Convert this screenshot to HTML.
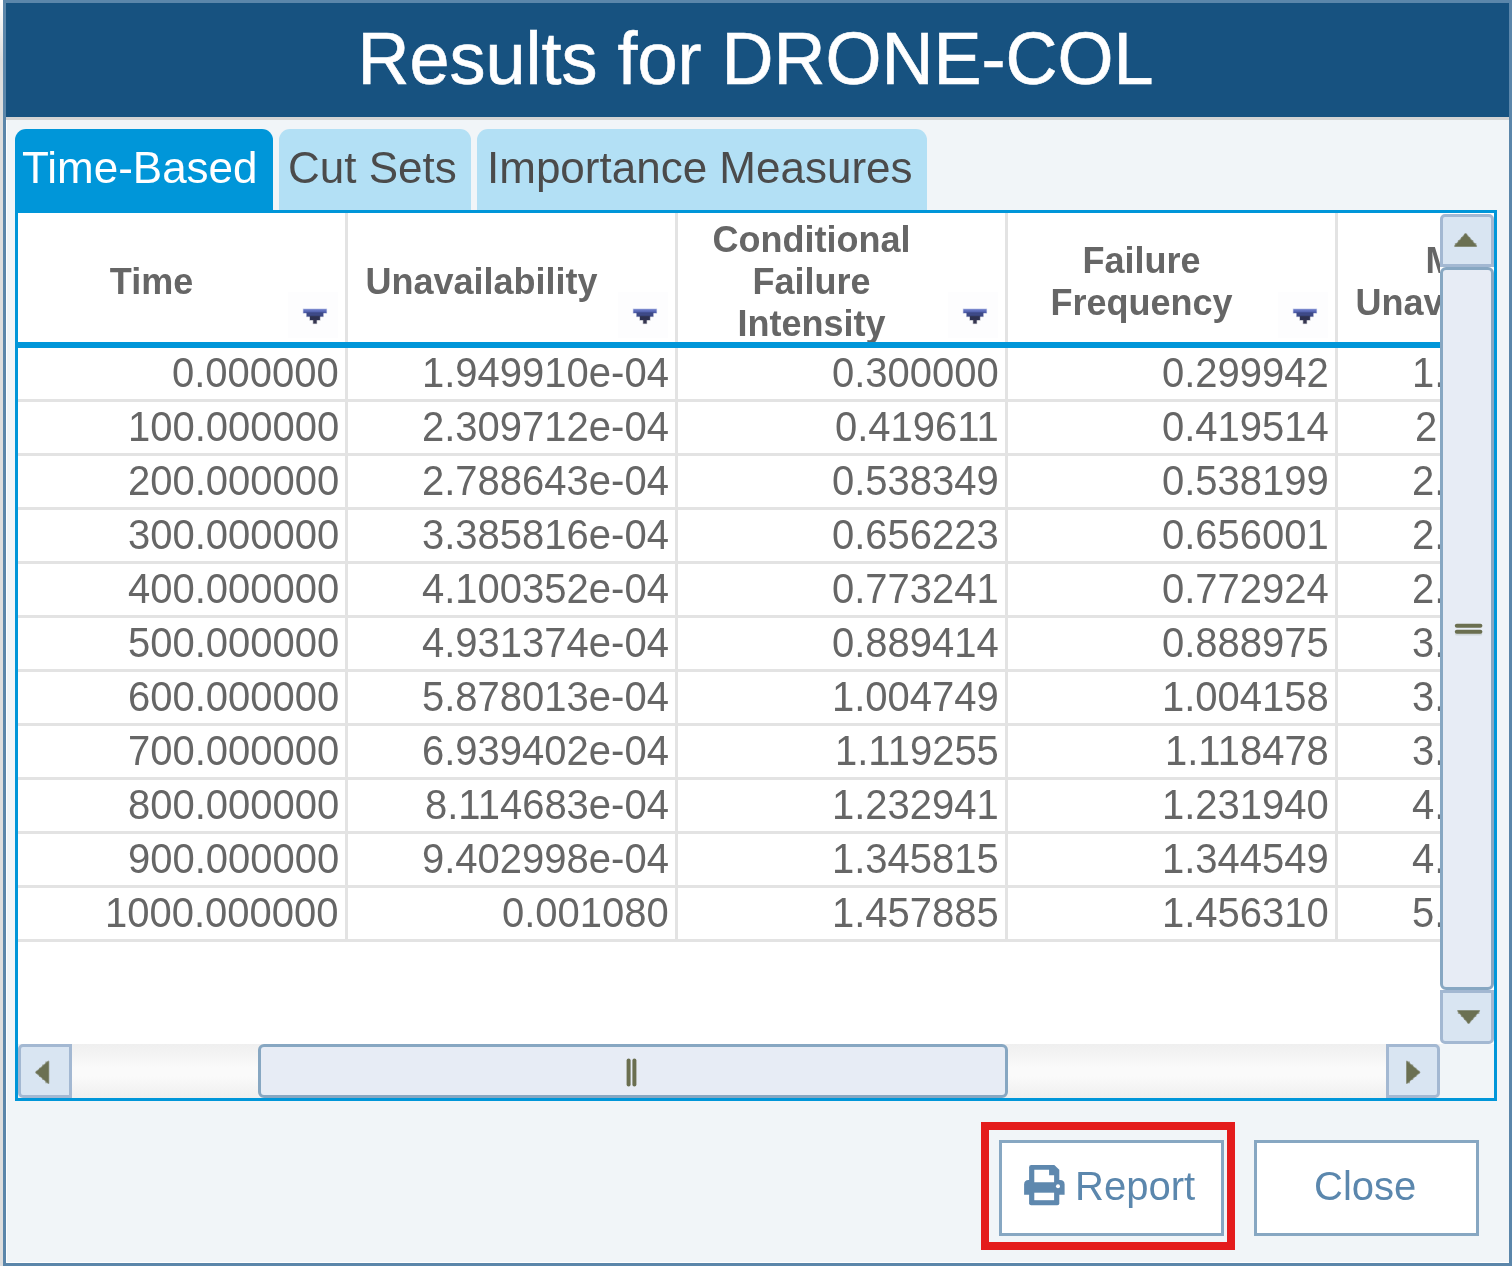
<!DOCTYPE html>
<html><head><meta charset="utf-8">
<style>
*{box-sizing:border-box}
html,body{margin:0;padding:0;width:1512px;height:1266px;overflow:hidden;background:#dedede;font-family:"Liberation Sans",sans-serif}
.a{position:absolute}
#strip{left:0;top:0;width:3px;height:1266px;background:linear-gradient(#ffffff 0px,#dedede 60px,#dedede)}
#dlg{left:3px;top:0;width:1509px;height:1266px;background:#5b86aa}
#inner{left:6px;top:3px;width:1503px;height:1260px;background:#f1f5f8;border-left:1px solid #fff;border-bottom:1px solid #fff}
#hdr{left:6px;top:3px;width:1503px;height:114px;background:#175280}
#hline{left:6px;top:117px;width:1503px;height:3px;background:#d4d4d4}
#title{left:0;top:23px;width:1511px;text-align:center;color:#fff;font-size:72px;line-height:72px;white-space:nowrap;transform:scaleY(1.025);transform-origin:0 61px;-webkit-text-stroke:0.6px #fff}
.tab{top:128.5px;height:81.5px;border-radius:11px 11px 0 0;background:#b3e0f5;color:#4b4b4b;font-size:44px;line-height:44px;white-space:nowrap}
.tab span{position:absolute;top:17px}
#tab1{left:14.5px;width:258.5px;background:#0096d9;color:#fff}
#tab2{left:279px;width:192px}
#tab3{left:477px;width:450px}
#tbl{left:15px;top:210px;width:1482px;height:891px;border:3px solid #0096d9;background:#fff}
.vl{top:213px;width:3px;height:729px;background:#e3e3e3}
.hl{left:18px;width:1422px;height:3px;background:#e3e3e3}
#hdrc{left:18px;top:213px;width:1422px;height:129px;overflow:hidden}
.hc{position:absolute;width:269px;text-align:center;font-weight:bold;font-size:36px;line-height:42px;color:#666;white-space:nowrap}
.sbg{position:absolute;top:79px;width:50px;height:46px;background:rgba(236,239,250,0.12)}
#ov{left:0;top:0;pointer-events:none}
#ov2{left:0;top:0;pointer-events:none}
#hbord{left:18px;top:342px;width:1422px;height:6px;background:#0096d9}
#body{left:18px;top:213px;width:1422px;height:729px;overflow:hidden}
.dc{position:absolute;font-size:40px;line-height:40px;color:#666;white-space:nowrap;transform:scaleY(1.04);transform-origin:0 33.87px}
#empty{left:18px;top:942px;width:1476px;height:102px;background:#fff}
/* scrollbars */
.sbtn{background:#d9e5f2;border:3px solid #a3b8d2}
#vup{left:1440px;top:214px;width:54px;height:53px;border-radius:5px 5px 0 0}
#vthumb{left:1440px;top:267px;width:54px;height:723px;background:#e7ecf5;border:3px solid #87a7c2;border-radius:6px}
#vdn{left:1440px;top:990px;width:54px;height:54px;border-radius:0 0 5px 5px}
#htrack{left:18px;top:1044px;width:1422px;height:54px;background:linear-gradient(#efefef,#fafafa 45%,#fafafa 60%,#efefef)}
#hleft{left:18px;top:1044px;width:54px;height:54px;border-radius:5px 0 0 5px}
#hthumb{left:258px;top:1044px;width:750px;height:54px;background:#e7ecf5;border:3px solid #87a7c2;border-radius:6px}
#hright{left:1386px;top:1044px;width:54px;height:54px;border-radius:0 5px 5px 0}
#corner{left:1440px;top:1044px;width:54px;height:54px;background:#f1f5f8}
/* buttons */
#red{left:981px;top:1122px;width:254px;height:128px;border:8px solid #e41c1c}
.btn{top:1140px;width:225px;height:96px;border:3px solid #87a7c2;background:#fff;color:#5b87ad;font-size:40px;line-height:40px;white-space:nowrap}
.btn span{position:absolute}
#rep{left:999px}
#cls{left:1254px}
.dc,.hc,.tab span,.btn span,#title{will-change:transform}
</style></head><body>
<div class="a" id="strip"></div>
<div class="a" id="dlg"></div>
<div class="a" id="inner"></div>
<div class="a" id="hdr"></div>
<div class="a" id="hline"></div>
<div class="a" id="title">Results for DRONE-COL</div>
<div class="a tab" id="tab1"><span style="left:7px">Time-Based</span></div>
<div class="a tab" id="tab2"><span style="left:8.5px">Cut Sets</span></div>
<div class="a tab" id="tab3"><span style="left:10px">Importance Measures</span></div>
<div class="a" id="tbl"></div>
<div class="a vl" style="left:345px"></div>
<div class="a vl" style="left:675px"></div>
<div class="a vl" style="left:1005px"></div>
<div class="a vl" style="left:1335px"></div>
<div class="a hl" style="top:399px"></div>
<div class="a hl" style="top:453px"></div>
<div class="a hl" style="top:507px"></div>
<div class="a hl" style="top:561px"></div>
<div class="a hl" style="top:615px"></div>
<div class="a hl" style="top:669px"></div>
<div class="a hl" style="top:723px"></div>
<div class="a hl" style="top:777px"></div>
<div class="a hl" style="top:831px"></div>
<div class="a hl" style="top:885px"></div>
<div class="a hl" style="top:939px"></div>
<div class="a" id="hdrc"><div class="sbg" style="left:270px"></div><div class="hc" style="left:-1.0px;top:48px">Time</div><div class="sbg" style="left:600px"></div><div class="hc" style="left:329.0px;top:48px">Unavailability</div><div class="sbg" style="left:930px"></div><div class="hc" style="left:659.0px;top:5.5px">Conditional<br>Failure<br>Intensity</div><div class="sbg" style="left:1260px"></div><div class="hc" style="left:989.0px;top:26.5px">Failure<br>Frequency</div><div class="hc" style="left:1318.8px;top:26.5px">Mean<br>Unavailability</div></div>
<div class="a" id="body"><div class="dc" style="top:139.6px;right:1101px">0.000000</div><div class="dc" style="top:139.6px;right:771px">1.949910e-04</div><div class="dc" style="top:139.6px;right:441px">0.300000</div><div class="dc" style="top:139.6px;right:111px">0.299942</div><div class="dc" style="top:139.6px;left:1393.6px">1.949910e-04</div><div class="dc" style="top:193.6px;right:1101px">100.000000</div><div class="dc" style="top:193.6px;right:771px">2.309712e-04</div><div class="dc" style="top:193.6px;right:441px">0.419611</div><div class="dc" style="top:193.6px;right:111px">0.419514</div><div class="dc" style="top:193.6px;left:1396.6px">2.129811e-04</div><div class="dc" style="top:247.6px;right:1101px">200.000000</div><div class="dc" style="top:247.6px;right:771px">2.788643e-04</div><div class="dc" style="top:247.6px;right:441px">0.538349</div><div class="dc" style="top:247.6px;right:111px">0.538199</div><div class="dc" style="top:247.6px;left:1393.6px">2.349422e-04</div><div class="dc" style="top:301.6px;right:1101px">300.000000</div><div class="dc" style="top:301.6px;right:771px">3.385816e-04</div><div class="dc" style="top:301.6px;right:441px">0.656223</div><div class="dc" style="top:301.6px;right:111px">0.656001</div><div class="dc" style="top:301.6px;left:1393.6px">2.608520e-04</div><div class="dc" style="top:355.6px;right:1101px">400.000000</div><div class="dc" style="top:355.6px;right:771px">4.100352e-04</div><div class="dc" style="top:355.6px;right:441px">0.773241</div><div class="dc" style="top:355.6px;right:111px">0.772924</div><div class="dc" style="top:355.6px;left:1393.6px">2.911350e-04</div><div class="dc" style="top:409.6px;right:1101px">500.000000</div><div class="dc" style="top:409.6px;right:771px">4.931374e-04</div><div class="dc" style="top:409.6px;right:441px">0.889414</div><div class="dc" style="top:409.6px;right:111px">0.888975</div><div class="dc" style="top:409.6px;left:1393.6px">3.262000e-04</div><div class="dc" style="top:463.6px;right:1101px">600.000000</div><div class="dc" style="top:463.6px;right:771px">5.878013e-04</div><div class="dc" style="top:463.6px;right:441px">1.004749</div><div class="dc" style="top:463.6px;right:111px">1.004158</div><div class="dc" style="top:463.6px;left:1393.6px">3.664000e-04</div><div class="dc" style="top:517.6px;right:1101px">700.000000</div><div class="dc" style="top:517.6px;right:771px">6.939402e-04</div><div class="dc" style="top:517.6px;right:441px">1.119255</div><div class="dc" style="top:517.6px;right:111px">1.118478</div><div class="dc" style="top:517.6px;left:1393.6px">3.929000e-04</div><div class="dc" style="top:571.6px;right:1101px">800.000000</div><div class="dc" style="top:571.6px;right:771px">8.114683e-04</div><div class="dc" style="top:571.6px;right:441px">1.232941</div><div class="dc" style="top:571.6px;right:111px">1.231940</div><div class="dc" style="top:571.6px;left:1393.6px">4.319000e-04</div><div class="dc" style="top:625.6px;right:1101px">900.000000</div><div class="dc" style="top:625.6px;right:771px">9.402998e-04</div><div class="dc" style="top:625.6px;right:441px">1.345815</div><div class="dc" style="top:625.6px;right:111px">1.344549</div><div class="dc" style="top:625.6px;left:1393.6px">4.753000e-04</div><div class="dc" style="top:679.6px;right:1101px">1000.000000</div><div class="dc" style="top:679.6px;right:771px">0.001080</div><div class="dc" style="top:679.6px;right:441px">1.457885</div><div class="dc" style="top:679.6px;right:111px">1.456310</div><div class="dc" style="top:679.6px;left:1393.6px">5.232000e-04</div></div>
<div class="a" id="hbord"></div>
<div class="a" id="empty"></div>
<div class="a" id="htrack"></div>
<div class="a sbtn" id="hleft"></div>
<div class="a" id="hthumb"></div>
<div class="a sbtn" id="hright"></div>
<div class="a" id="corner"></div>
<div class="a sbtn" id="vup"></div>
<div class="a" id="vthumb"></div>
<div class="a sbtn" id="vdn"></div>
<div class="a" id="red"></div>
<div class="a btn" id="rep"><span style="left:73px;top:23px">Report</span></div>
<div class="a btn" id="cls"><span style="left:56.5px;top:23px">Close</span></div>
<svg class="a" id="ov" width="1512" height="1266" viewBox="0 0 1512 1266"><defs><linearGradient id="sg" x1="0" y1="0" x2="0" y2="1"><stop offset="0" stop-color="#7282cc"/><stop offset="1" stop-color="#4756a3"/></linearGradient></defs><rect x="303.40" y="309.10" width="23.10" height="3.90" fill="url(#sg)" stroke="url(#sg)" stroke-opacity="0.35" stroke-width="1.2"/><rect x="306.70" y="312.60" width="16.50" height="3.90" fill="#3e4a86" stroke="#3e4a86" stroke-opacity="0.35" stroke-width="1.2"/><rect x="310.00" y="316.10" width="9.90" height="3.90" fill="#2c3050" stroke="#2c3050" stroke-opacity="0.35" stroke-width="1.2"/><rect x="313.30" y="319.60" width="3.30" height="3.90" fill="#363651" stroke="#363651" stroke-opacity="0.35" stroke-width="1.2"/><rect x="633.40" y="309.10" width="23.10" height="3.90" fill="url(#sg)" stroke="url(#sg)" stroke-opacity="0.35" stroke-width="1.2"/><rect x="636.70" y="312.60" width="16.50" height="3.90" fill="#3e4a86" stroke="#3e4a86" stroke-opacity="0.35" stroke-width="1.2"/><rect x="640.00" y="316.10" width="9.90" height="3.90" fill="#2c3050" stroke="#2c3050" stroke-opacity="0.35" stroke-width="1.2"/><rect x="643.30" y="319.60" width="3.30" height="3.90" fill="#363651" stroke="#363651" stroke-opacity="0.35" stroke-width="1.2"/><rect x="963.40" y="309.10" width="23.10" height="3.90" fill="url(#sg)" stroke="url(#sg)" stroke-opacity="0.35" stroke-width="1.2"/><rect x="966.70" y="312.60" width="16.50" height="3.90" fill="#3e4a86" stroke="#3e4a86" stroke-opacity="0.35" stroke-width="1.2"/><rect x="970.00" y="316.10" width="9.90" height="3.90" fill="#2c3050" stroke="#2c3050" stroke-opacity="0.35" stroke-width="1.2"/><rect x="973.30" y="319.60" width="3.30" height="3.90" fill="#363651" stroke="#363651" stroke-opacity="0.35" stroke-width="1.2"/><rect x="1293.40" y="309.10" width="23.10" height="3.90" fill="url(#sg)" stroke="url(#sg)" stroke-opacity="0.35" stroke-width="1.2"/><rect x="1296.70" y="312.60" width="16.50" height="3.90" fill="#3e4a86" stroke="#3e4a86" stroke-opacity="0.35" stroke-width="1.2"/><rect x="1300.00" y="316.10" width="9.90" height="3.90" fill="#2c3050" stroke="#2c3050" stroke-opacity="0.35" stroke-width="1.2"/><rect x="1303.30" y="319.60" width="3.30" height="3.90" fill="#363651" stroke="#363651" stroke-opacity="0.35" stroke-width="1.2"/><path d="M1454.86 243.07h21.49v3.07h-21.49ZM1457.92 240.00h15.35v3.07h-15.35ZM1460.99 236.93h9.21v3.07h-9.21ZM1464.06 233.86h3.07v3.07h-3.07Z" fill="#6b7052" fill-opacity="0.5"/><path d="M1454.86 246.14L1476.34 246.14L1465.60 233.86Z" fill="#6b7052" stroke="#6b7052" stroke-width="1.6" stroke-linejoin="round" stroke-opacity="0.6"/><path d="M1457.86 1010.80h21.49v3.10h-21.49ZM1460.92 1013.90h15.35v3.10h-15.35ZM1463.99 1017.00h9.21v3.10h-9.21ZM1467.06 1020.10h3.07v3.10h-3.07Z" fill="#6b7052" fill-opacity="0.5"/><path d="M1457.86 1010.80L1479.34 1010.80L1468.60 1023.20Z" fill="#6b7052" stroke="#6b7052" stroke-width="1.6" stroke-linejoin="round" stroke-opacity="0.6"/><path d="M45.35 1061.45h3.15v21.70h-3.15ZM42.20 1064.55h3.15v15.50h-3.15ZM39.05 1067.65h3.15v9.30h-3.15ZM35.90 1070.75h3.15v3.10h-3.15Z" fill="#6b7052" fill-opacity="0.5"/><path d="M48.50 1061.45L48.50 1083.15L35.90 1072.30Z" fill="#6b7052" stroke="#6b7052" stroke-width="1.6" stroke-linejoin="round" stroke-opacity="0.6"/><path d="M1406.80 1061.45h3.20v21.70h-3.20ZM1410.00 1064.55h3.20v15.50h-3.20ZM1413.20 1067.65h3.20v9.30h-3.20ZM1416.40 1070.75h3.20v3.10h-3.20Z" fill="#6b7052" fill-opacity="0.5"/><path d="M1406.80 1061.45L1406.80 1083.15L1419.60 1072.30Z" fill="#6b7052" stroke="#6b7052" stroke-width="1.6" stroke-linejoin="round" stroke-opacity="0.6"/><rect x="1455" y="632.5" width="27.2" height="3" rx="1.5" fill="#c2c9c9" fill-opacity="0.6"/><rect x="1454.8" y="623.8" width="27.6" height="4" rx="2" fill="#6b6f50"/><rect x="1454.8" y="629.8" width="27.6" height="4" rx="2" fill="#6b6f50"/><rect x="626.6" y="1058.6" width="4" height="28" rx="2" fill="#6b6f50"/><rect x="632.4" y="1058.6" width="4" height="28" rx="2" fill="#6b6f50"/></svg><svg class="a" id="ov2" width="1512" height="1266" viewBox="0 0 1512 1266"><g transform="translate(1024.1,1165)"><path d="M5 2.2 Q5 0 7.2 0 H30.2 L35.2 4.8 V16 H5 Z" fill="#5e88ae"/><path d="M0 19.5 Q0 15 4.5 15 H36 Q40.5 15 40.5 19.5 V29.8 H0 Z" fill="#5e88ae"/><path d="M5 27 H35.2 V38.2 Q35.2 40.2 33.2 40.2 H7 Q5 40.2 5 38.2 Z" fill="#5e88ae"/><path d="M10.2 4.8 H25 V10.2 H30 V17.3 H10.2 Z" fill="#fff"/><rect x="10.2" y="27.7" width="19.8" height="7.5" fill="#fff"/><circle cx="33.9" cy="21.3" r="2" fill="#fff"/></g></svg>
</body></html>
